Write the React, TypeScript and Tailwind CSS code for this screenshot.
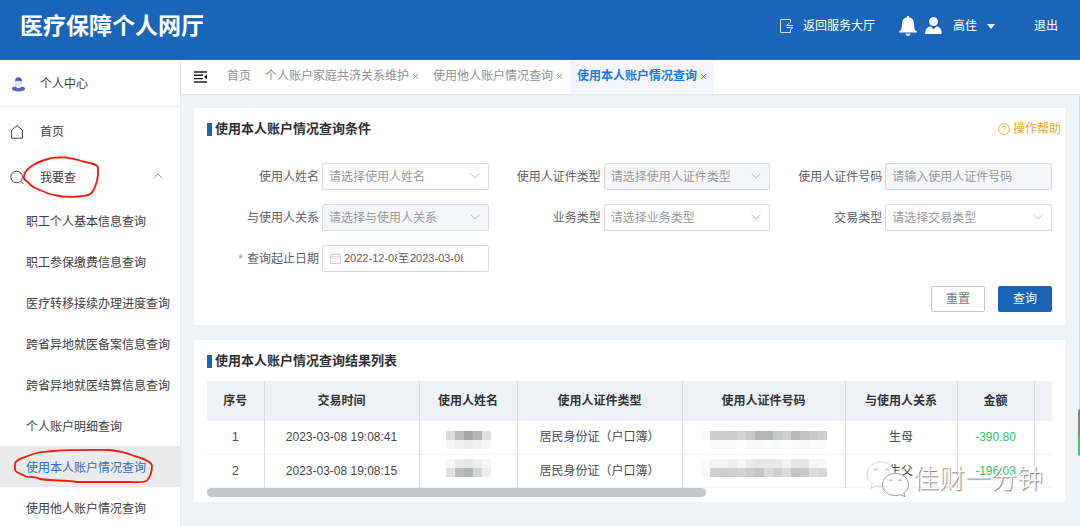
import { useState } from 'react';
import React from 'react'

const tabs = [
    { label: '首页', closable: false },
    { label: '个人账户家庭共济关系维护', closable: true },
    { label: '使用他人账户情况查询', closable: true },
    { label: '使用本人账户情况查询', closable: true },
];

const queryMenu = [
    '职工个人基本信息查询',
    '职工参保缴费信息查询',
    '医疗转移接续办理进度查询',
    '跨省异地就医备案信息查询',
    '跨省异地就医结算信息查询',
    '个人账户明细查询',
    '使用本人账户情况查询',
    '使用他人账户情况查询',
];

const columns = ['序号', '交易时间', '使用人姓名', '使用人证件类型', '使用人证件号码', '与使用人关系', '金额', ''];

const rows = [
    {
        id: 1,
        time: '2023-03-08 19:08:41',
        idType: '居民身份证（户口簿）',
        relation: '生母',
        amount: '-390.80',
        name: [
            ['#dddddd', '#b9baba', '#a6a6a7', '#b5b5b5', '#e0e0e0'],
            ['#f6f6f6', '#efefef', '#ededed', '#f0f0f0', '#f7f7f7'],
        ],
        idNo: [
            ['#fafafa', '#cbcccc', '#cccccc', '#cbcbcb', '#d2d3d3', '#c8c8c8', '#b4b7b6', '#b4b7b6', '#c6c9c8', '#d0d0d0', '#b8b8b8', '#c2c2c2', '#c6c8c8', '#cfcfcf'],
            ['#ffffff', '#fbfbfb', '#fbfbfb', '#fbfbfb', '#fdfdfd', '#fafafa', '#fafafa', '#fcfcfc', '#fafafa', '#fcfcfc', '#fbfbfb', '#f8f8f8', '#fcfcfc', '#fbfbfb'],
        ],
        top: 10,
    },
    {
        id: 2,
        time: '2023-03-08 19:08:15',
        idType: '居民身份证（户口簿）',
        relation: '生父',
        amount: '-196.03',
        name: [
            ['#f5f5f5', '#e9eaea', '#e5e6e6', '#ebeeed', '#f6f6f6'],
            ['#dfdfdf', '#bcbebd', '#b0b4b2', '#d3d3d3', '#eeeeee'],
        ],
        idNo: [
            ['#fafafa', '#f3f3f3', '#f3f3f3', '#eeeeee', '#f5f6f6', '#ebebeb', '#e7e7e7', '#e8e8e8', '#e9e9e9', '#f2f2f2', '#e8e8e8', '#e7e9e8', '#f5f5f5', '#f7f7f7'],
            ['#f8f8f8', '#cfcfcf', '#cecece', '#d0d0d0', '#d2d4d3', '#cccccc', '#c0c4c2', '#dadada', '#cecece', '#dcdcdc', '#c5c5c5', '#cacaca', '#dcdcdc', '#d7d7d7'],
        ],
        top: 4,
    },
];

const Chevron = ({ className }: { className: string }) => (
    <svg className={className} viewBox="0 0 10 6" fill="none" stroke="currentColor" strokeWidth="0.9">
        <path d="M0.6 0.6 5 5 9.4 0.6" />
    </svg>
);

// masked personal data
const Mosaic = ({ cells, top }: { cells: string[][]; top: number }) => (
    <svg className="mx-auto block h-8" width={cells[0].length * 9} viewBox={`0 0 ${cells[0].length * 9} 32`} shapeRendering="crispEdges">
        {cells.map((line, y) => line.map((color, x) => (
            <rect key={`${x}-${y}`} x={x * 9} y={top + y * 9} width="9" height="9" fill={color} />
        )))}
    </svg>
);

interface FieldProps {
    id: string;
    label: string;
    placeholder: string;
    disabled?: boolean;
}

const FieldLabel = ({ id, label, required }: { id: string; label: string; required?: boolean }) => (
    <label htmlFor={id} className="w-[115px] shrink-0 whitespace-nowrap pr-[3px] text-right text-[#606266]">
        {required && <span className="mr-1 text-[#f56c6c]">*</span>}
        {label}
    </label>
);

const SelectField = ({ id, label, placeholder, disabled }: FieldProps) => (
    <div className="flex items-center">
        <FieldLabel id={id} label={label} />
        <div className="relative flex-1">
            <select id={id} disabled={disabled}
                className="block h-[27px] w-full appearance-none rounded-xs border border-[#d8dade] bg-white px-[6px] text-[#9a9a9c] opacity-100 disabled:bg-[#f5f6fa]">
                <option>{placeholder}</option>
            </select>
            <Chevron className="pointer-events-none absolute right-[9px] top-[10px] h-[6px] w-[10px] text-[#b4b8c0]" />
        </div>
    </div>
);

const Header = () => (
    <header className="flex h-[60px] shrink-0 items-center bg-[#1b65b9] pb-2 pl-5 pr-[22px] text-white">
        <h1 className="flex-1 text-[23px] font-bold">医疗保障个人网厅</h1>
        <a href="#hall" className="flex items-center gap-[10px]">
            <svg className="h-[14px] w-[13px]" viewBox="0 0 13 14" fill="none" stroke="#cfe0f3">
                <path d="M10.500 3.500V.500H.500v13h10v-2.500" />
                <path d="M13 6.500H6.500L9.500 4M6.500 8.500H13L10 11" />
            </svg>
            返回服务大厅
        </a>
        <button aria-label="消息" className="ml-6">
            <svg className="h-5 w-[18px]" viewBox="0 0 18 20" fill="#fff">
                <path d="M9 0c.9 0 1.300.6 1.300 1.400C13.400 2.100 15 4.300 15 7.500c0 4.700.8 6.800 2.800 8v.9H.2v-.9c2-1.200 2.800-3.300 2.800-8C3 4.300 4.600 2.100 7.700 1.400 7.700.6 8.100 0 9 0Z" />
                <path d="M6.300 17.400h5.400C11.300 19 10.300 20 9 20s-2.300-1-2.700-2.600Z" fill="#d5e4f5" />
            </svg>
        </button>
        <button className="ml-2 flex items-center">
            <svg className="mb-[2px] h-[17px] w-[17px]" viewBox="0 0 17 17" fill="#fff">
                <circle cx="8.500" cy="4.600" r="4.500" />
                <path d="M.2 16.900c0-4.200 1.500-6.600 5.200-7.600l3.100 3 3.100-3c3.700 1 5.200 3.400 5.200 7.600Z" />
            </svg>
            <span className="ml-[11px]">高佳</span>
            <svg className="ml-[10px] h-[5px] w-2" viewBox="0 0 8 5" fill="#fff"><path d="M0 0h8L4 5Z" /></svg>
        </button>
        <a href="#logout" className="ml-[39px]">退出</a>
    </header>
);

const Sidebar = ({ active, onSelect }: { active: string; onSelect: (item: string) => void }) => (
    <aside className="w-[180px] shrink-0 overflow-hidden bg-white text-[#3f4043]">
        <a href="#me" className="flex h-[47px] items-center gap-[14px] border-b border-[#e6e8ea] pl-[11px] pt-[2px]">
            <svg className="h-[15px] w-[15px]" viewBox="0 0 15 15">
                <circle cx="7.500" cy="5.400" r="3.800" fill="#e8e2ea" />
                <path d="M4 4.400C4 1.500 5.400.3 7.500.3S11 1.500 11 4.400C9 3.400 6 3.400 4 4.400Z" fill="#4a5fb8" />
                <path d="M.9 11.300c0-1.300 2.200-1.700 4-1.900.8 2 4.400 2 5.200 0 1.800.2 4 .6 4 1.900 0 2-3 3.300-6.600 3.300S.9 13.300.9 11.300Z" fill="#5468c4" />
            </svg>
            个人中心
        </a>
        <a href="#home" className="flex h-[47px] items-center gap-[14px] pl-[10px] pt-[2px]">
            <svg className="h-4 w-4" viewBox="0 0 16 16" fill="none" stroke="#444">
                <path d="M1.500 6.200 7 1.500l5.500 4.700v8h-11Z" />
            </svg>
            首页
        </a>
        <button className="relative flex h-[46px] w-full items-center gap-[14px] pl-[10px] pt-[2px]">
            <svg className="h-4 w-4" viewBox="0 0 16 16" fill="none" stroke="#444">
                <circle cx="6.600" cy="7" r="5.800" />
                <path d="m10.800 11.200 2.700 2.700" />
            </svg>
            我要查
            <Chevron className="mb-1 ml-auto mr-[17px] h-[6px] w-[10px] rotate-180 text-[#8a8c90]" />
            <svg className="pointer-events-none absolute left-5 top-0 h-[46px] w-20" viewBox="20 154 80 46" fill="none" stroke="#f8190f" strokeWidth="1.800" strokeLinejoin="round">
                <path d="M24 176C25 170 34 162 50 158.500C52 157 57 158 60 157.500C68 157 75 159 83 161.500C91 163 98 164 98 168C98.500 173 98 177 97 181C95 187 94 191 91 193.500C87 197 72 197 62 196.500C55 195 50 195 45 192C37 189 31 187 28 182C25 180 23 179 24 176Z" />
            </svg>
        </button>
        <nav>
            {queryMenu.map((item) => (
                <a key={item} href="#query" onClick={() => onSelect(item)}
                    className={`relative flex h-[41px] items-center whitespace-nowrap pl-[26px] pt-[2px] ${item === active ? 'bg-[#ebebec] text-[#2a6fc4]' : ''}`}>
                    {item}
                    {item === active && (
                        <svg className="pointer-events-none absolute left-[10px] top-0 h-[41px] w-[146px]" viewBox="10 446 146 41" fill="none" stroke="#f8190f" strokeWidth="1.800" strokeLinejoin="round">
                            <path d="M15 464C15 459 26 457 32 454.500C40 451 46 452 54 451C73 449.500 94 450 110 450C119 451 127 453 133 455.500C141 458 152 461 152 466C152 471 150 477 147 480.500C145 483 136 482 128 482H77C66 480 52 481 40 479C36 476 30 478 26 476.500C21 474 15 472 15 470Z" />
                        </svg>
                    )}
                </a>
            ))}
        </nav>
    </aside>
);

const TabBar = ({ active, onSelect }: { active: string; onSelect: (item: string) => void }) => (
    <div className="flex h-[34px] shrink-0 bg-white pl-3 text-[#8f9297] shadow-[0_1px_2px_#dfe3e8]">
        <button aria-label="收起菜单" className="mr-3">
            <svg className="h-[14px] w-[15px]" viewBox="0 0 15 14" stroke="#222" strokeWidth="1.400">
                <path d="M1 2h13M1 5.300h9M1 8.600h9M1 12h13" />
                <path d="M14 4.300v5L11 6.800Z" fill="#222" stroke="none" />
            </svg>
        </button>
        {tabs.map(({ label, closable }) => (
            <div key={label} className={`flex items-center gap-[3px] whitespace-nowrap px-[7px] pb-[2px] ${label === active ? 'bg-[#f4f6fb] font-bold text-[#1f78f0]' : ''}`}>
                <button onClick={() => onSelect(label)}>{label}</button>
                {closable && (
                    <button aria-label={`关闭${label}`}>
                        <svg className="h-[7px] w-[7px]" viewBox="0 0 7 7" stroke="currentColor" strokeWidth="0.800"><path d="m1 1 5 5M6 1 1 6" /></svg>
                    </button>
                )}
            </div>
        ))}
    </div>
);

const CardTitle = ({ children }: { children: React.ReactNode }) => (
    <h2 className="flex items-center gap-[3px] text-[13px] font-bold leading-5 text-[#2f3033]">
        <span className="h-[13px] w-[5px] bg-[#1b65b9]" />
        {children}
    </h2>
);

const QueryForm = () => {
    const [range, setRange] = useState({ start: '2022-12-08', end: '2023-03-08' });

    return (
        <section className="rounded-xs bg-white px-[13px] pb-[13px] pt-[11px]">
            <div className="flex items-center justify-between">
                <CardTitle>使用本人账户情况查询条件</CardTitle>
                <a href="#help" className="-mr-[9px] flex items-center gap-[3px] text-[#f9a01f]">
                    <svg className="h-3 w-3" viewBox="0 0 12 12" fill="none" stroke="currentColor" strokeWidth="0.900">
                        <circle cx="6" cy="6" r="5.400" />
                        <path d="M4.300 4.900c0-2.300 3.500-2.200 3.500-.2C7.800 5.800 6 5.900 6 7.300M6 8.300v1" />
                    </svg>
                    操作帮助
                </a>
            </div>
            <form onSubmit={(e) => e.preventDefault()}>
                <div className="mt-6 grid grid-cols-3 gap-y-[14px]">
                    <SelectField id="name" label="使用人姓名" placeholder="请选择使用人姓名" />
                    <SelectField id="idType" label="使用人证件类型" placeholder="请选择使用人证件类型" disabled />
                    <div className="flex items-center">
                        <FieldLabel id="idNo" label="使用人证件号码" />
                        <input id="idNo" disabled placeholder="请输入使用人证件号码"
                            className="h-[27px] w-0 flex-1 rounded-xs border border-[#d8dade] bg-[#f5f6fa] px-[6px] placeholder:text-[#9a9a9c]" />
                    </div>
                    <SelectField id="relation" label="与使用人关系" placeholder="请选择与使用人关系" disabled />
                    <SelectField id="bizType" label="业务类型" placeholder="请选择业务类型" />
                    <SelectField id="tradeType" label="交易类型" placeholder="请选择交易类型" />
                    <div className="flex items-center">
                        <FieldLabel id="start" label="查询起止日期" required />
                        <div className="flex h-[27px] flex-1 items-center rounded-xs border border-[#d8dade] pl-[7px] text-[11px] text-[#606266]">
                            <svg className="mr-[3px] h-[11px] w-[11px]" viewBox="0 0 11 11" fill="none" stroke="#c0c4cc" strokeWidth="0.800">
                                <path d="M.5 1.500h10v9H.5ZM.5 3.800h10M3 0v2.500M8 0v2.500M2.500 6h1.200M5 6h1.200M7.500 6h1.200M2.500 8.300h1.200M5 8.300h1.200M7.500 8.300h1.200" />
                            </svg>
                            <input id="start" value={range.start} className="w-[53px]"
                                onChange={(e) => setRange({ ...range, start: e.target.value })} />
                            <span className="mx-px">至</span>
                            <input aria-label="结束日期" value={range.end} className="w-[53px]"
                                onChange={(e) => setRange({ ...range, end: e.target.value })} />
                        </div>
                    </div>
                </div>
                <div className="mt-[14px] flex justify-end gap-[13px]">
                    <button type="reset" className="h-[26px] w-[54px] rounded-xs border border-[#c6c8cc] text-[#77797d]">重置</button>
                    <button type="submit" className="h-[26px] w-[54px] rounded-xs bg-[#1b65b9] text-white">查询</button>
                </div>
            </form>
        </section>
    );
};

const ResultTable = () => (
    <section className="relative rounded-xs bg-white px-[13px] pb-[5px] pt-[11px]">
        <CardTitle>使用本人账户情况查询结果列表</CardTitle>
        <div className="mt-[10px] overflow-hidden">
            <table className="w-[1437px] table-fixed text-center text-[#4a4b4e]">
                <colgroup>
                    <col className="w-[57px]" />
                    <col className="w-[155px]" />
                    <col className="w-[98px]" />
                    <col className="w-[165px]" />
                    <col className="w-[163px]" />
                    <col className="w-[112px]" />
                    <col className="w-[77px]" />
                    <col />
                </colgroup>
                <thead>
                    <tr className="h-10 bg-[#eff1f6] text-[#333437]">
                        {columns.map((column, i) => (
                            <th key={i} className="border-r border-[#d9dbde] p-0 font-bold">{column}</th>
                        ))}
                    </tr>
                </thead>
                <tbody>
                    {rows.map((row) => (
                        <tr key={row.id} className="h-[33px] border-b border-[#f4f5f6]">
                            <td className="border-r border-[#dcdddf] p-0">{row.id}</td>
                            <td className="border-r border-[#dcdddf] p-0">{row.time}</td>
                            <td className="border-r border-[#dcdddf] p-0"><Mosaic cells={row.name} top={row.top} /></td>
                            <td className="border-r border-[#dcdddf] p-0">{row.idType}</td>
                            <td className="border-r border-[#dcdddf] p-0"><Mosaic cells={row.idNo} top={row.top} /></td>
                            <td className="border-r border-[#dcdddf] p-0">{row.relation}</td>
                            <td className="border-r border-[#dcdddf] p-0 text-[#1fc968]">{row.amount}</td>
                            <td className="p-0" />
                        </tr>
                    ))}
                </tbody>
            </table>
            <div className="h-[9px]">
                <div className="h-[9px] w-[59%] rounded-full bg-[#c5c6ca]" />
            </div>
        </div>
        <div className="absolute bottom-[5px] right-[22px] flex items-center gap-[3px]">
            <svg className="h-9 w-[44px]" viewBox="0 0 44 36" fill="#fff" stroke="#8d8d8d" strokeWidth="0.900">
                <path d="M15 1C7 1 1 6.500 1 13.500c0 4 2 7.200 5.200 9.400L5 27.500l5-2.600c8 2.200 19-1.400 19-11.400C29 6.500 23 1 15 1Z" stroke="#b5b5b5" strokeWidth="0.600" />
                <path d="M29.500 12.500c-7.300 0-13 4.800-13 11s5.700 11 13 11c1.700 0 3.400-.3 5-.8l4.500 2-1.200-4c2.900-2 4.700-4.900 4.700-8.200 0-6.200-5.700-11-13-11Z" />
                <path d="M8 9.500c.4-2 3-2 3.500 0M19.500 9.500c.4-2 3-2 3.500 0M23.500 20c.3-1.700 2.500-1.700 3 0M32.500 20c.3-1.700 2.500-1.700 3 0" fill="none" />
            </svg>
            <span className="text-[26px] font-light leading-9 text-white [text-shadow:1px_1px_1px_#777]">佳财一分钟</span>
        </div>
    </section>
);

const App = () => {
    const [active, setActive] = useState('使用本人账户情况查询');

    return (
        <div className="relative flex h-screen flex-col overflow-hidden bg-[#eff3f6] font-['Liberation_Sans','Noto_Sans_CJK_SC',sans-serif] text-xs">
            <Header />
            <div className="flex min-h-0 flex-1">
                <Sidebar active={active} onSelect={setActive} />
                <div className="flex min-w-0 flex-1 flex-col border-l border-[#e8ebee]">
                    <TabBar active={active} onSelect={setActive} />
                    <main className="flex flex-col gap-[15px] py-[14px] pl-[13px] pr-[15px]">
                        <QueryForm />
                        <ResultTable />
                    </main>
                </div>
            </div>
            <div className="absolute right-0 top-24 h-[313px] w-px bg-[#d3d6da]" />
            <div className="absolute right-0 top-[409px] h-[47px] w-[2px] rounded-l-xs bg-linear-to-b from-[#858585] from-55% to-[#3ecf5a] to-60%" />
        </div>
    );
};

export default App
